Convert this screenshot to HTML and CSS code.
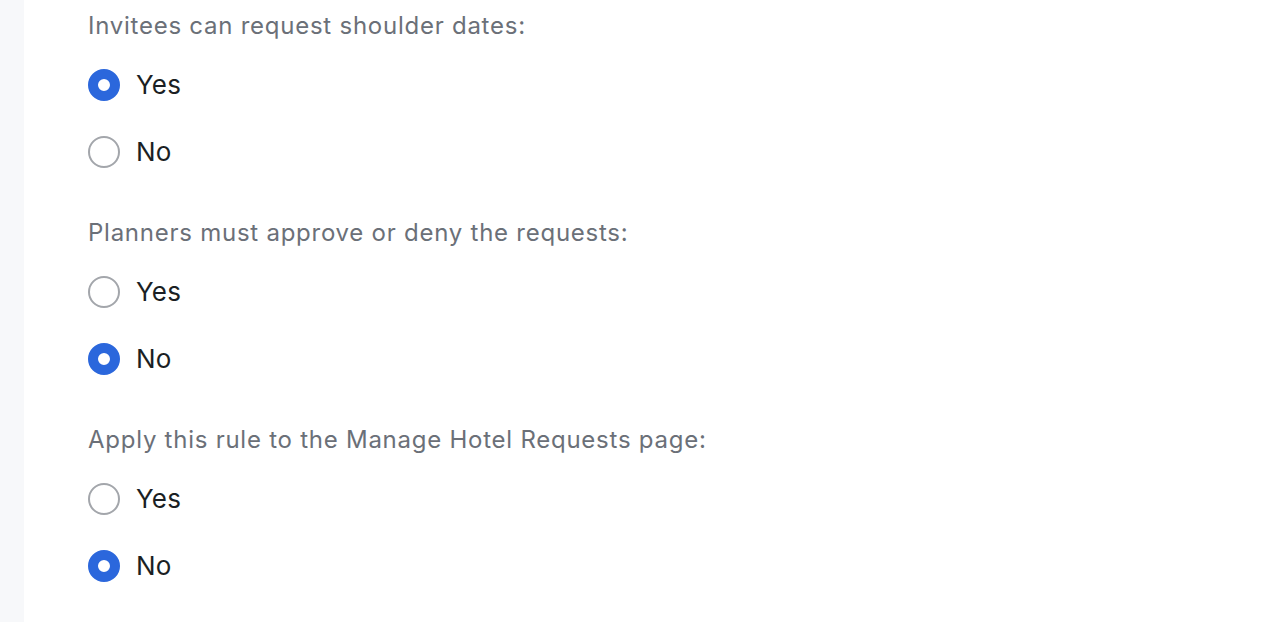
FILE: index.html
```html
<!DOCTYPE html>
<html>
<head>
<meta charset="utf-8">
<link rel="stylesheet" href="styles.css">
</head>
<body>
<div class="page">
  <aside class="strip"></aside>
  <main class="content">
    <section class="group">
      <div class="question">Invitees can request shoulder dates:</div>
      <div class="options">
        <label class="option"><span class="radio checked"></span><span class="label">Yes</span></label>
        <label class="option"><span class="radio"></span><span class="label">No</span></label>
      </div>
    </section>
    <section class="group">
      <div class="question">Planners must approve or deny the requests:</div>
      <div class="options">
        <label class="option"><span class="radio"></span><span class="label">Yes</span></label>
        <label class="option"><span class="radio checked"></span><span class="label">No</span></label>
      </div>
    </section>
    <section class="group">
      <div class="question">Apply this rule to the Manage Hotel Requests page:</div>
      <div class="options">
        <label class="option"><span class="radio"></span><span class="label">Yes</span></label>
        <label class="option"><span class="radio checked"></span><span class="label">No</span></label>
      </div>
    </section>
  </main>
</div>
</body>
</html>
```
FILE: styles.css
```css
* { box-sizing: border-box; }
html, body { margin: 0; padding: 0; background: #fff; }
body { font-family: Inter, "Noto Sans", sans-serif; }
.page { display: flex; min-height: 622px; }
.strip { width: 24px; background: #f7f8fa; flex: none; }
.content { padding: 10px 0 0 64px; display: flex; flex-direction: column; gap: 49px; }
.question { font-size: 24px; line-height: 32px; color: #6b7078; letter-spacing: 0.75px; }
.options { display: flex; flex-direction: column; gap: 35px; margin-top: 27px; }
.option { display: flex; align-items: center; gap: 16px; height: 32px; }
.radio { width: 32px; height: 32px; border-radius: 50%; border: 2px solid #a3a6ab; background: #fff; flex: none; }
.radio.checked { border: 10px solid #2b67dc; }
.label { font-size: 26px; color: #1b1f24; line-height: 32px; letter-spacing: 0.2px; }
```
